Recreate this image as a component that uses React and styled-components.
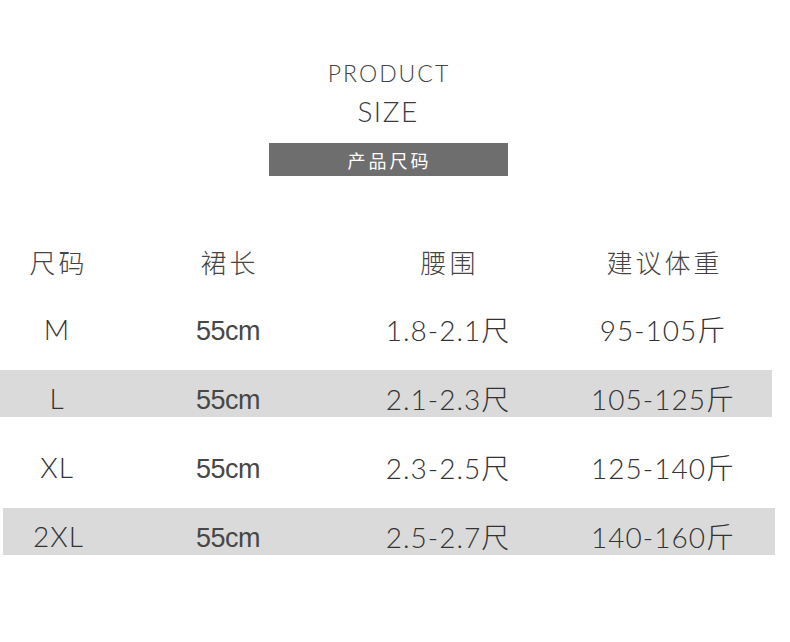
import styled, { createGlobalStyle } from "styled-components";

const SIZES = [
  { size: "M", length: "55cm", waist: "1.8-2.1尺", weight: "95-105斤" },
  { size: "L", length: "55cm", waist: "2.1-2.3尺", weight: "105-125斤", shaded: true },
  { size: "XL", length: "55cm", waist: "2.3-2.5尺", weight: "125-140斤" },
  { size: "2XL", length: "55cm", waist: "2.5-2.7尺", weight: "140-160斤", shaded: true, shift: 3 },
];

const App = () => {
  return (
    <Page>
      <GlobalStyle />
      <Heading>
        <Kicker>PRODUCT</Kicker>
        <Title>SIZE</Title>
        <Banner>产品尺码</Banner>
      </Heading>
      <Table>
        <HeadRow>
          <HeadCell>尺码</HeadCell>
          <HeadCell>裙长</HeadCell>
          <HeadCell>腰围</HeadCell>
          <HeadCell>建议体重</HeadCell>
        </HeadRow>
        {SIZES.map((row) => (
          <Row key={row.size} $shaded={row.shaded} $shift={row.shift || 0}>
            <Cell>{row.size}</Cell>
            <Cell $plain>{row.length}</Cell>
            <Cell>{row.waist}</Cell>
            <Cell>{row.weight}</Cell>
          </Row>
        ))}
      </Table>
    </Page>
  );
};
export default App;

const GlobalStyle = createGlobalStyle`
  html, body {
    margin: 0;
    padding: 0;
    background: #ffffff;
  }
  body {
    font-family: "Lato", "Noto Sans CJK SC", sans-serif;
  }
`;

const Page = styled.div`
  width: 790px;
  height: 642px;
  overflow: hidden;
  background: #ffffff;
  padding-top: 58px;
  box-sizing: border-box;
`;

const Heading = styled.header`
  display: flex;
  flex-direction: column;
  align-items: center;
  padding-right: 14px;
`;

const Kicker = styled.div`
  font-family: "Lato", sans-serif;
  font-weight: 300;
  font-size: 23px;
  line-height: 30px;
  letter-spacing: 2px;
  color: #444444;
  padding-left: 2px;
`;

const Title = styled.div`
  font-family: "Lato", sans-serif;
  font-weight: 300;
  font-size: 28px;
  line-height: 36px;
  letter-spacing: 1.5px;
  color: #3c3c3c;
  margin-top: 5px;
`;

const Banner = styled.div`
  width: 239px;
  height: 33px;
  margin-top: 14px;
  background: #6e6e6e;
  color: #ffffff;
  font-family: "Noto Sans CJK SC", sans-serif;
  font-size: 18px;
  letter-spacing: 3px;
  display: flex;
  align-items: center;
  justify-content: center;
  padding-left: 3px;
  box-sizing: border-box;
`;

const Table = styled.section`
  display: flex;
  flex-direction: column;
  margin-top: 62px;
  gap: 22px;
`;

const HeadRow = styled.div`
  display: grid;
  grid-template-columns: 114px 228px 212px 218px;
  width: 772px;
  height: 47px;
  margin-bottom: -6px;
`;

const HeadCell = styled.div`
  display: flex;
  align-items: center;
  justify-content: center;
  font-family: "Noto Sans CJK SC", sans-serif;
  font-weight: 300;
  font-size: 26px;
  letter-spacing: 3px;
  padding-left: 3px;
  color: #444444;
`;

const Row = styled.div`
  display: grid;
  grid-template-columns: ${(p) => 114 - p.$shift}px 228px 212px 218px;
  width: 772px;
  height: 47px;
  padding-top: 8px;
  box-sizing: border-box;
  margin-left: ${(p) => p.$shift}px;
  background: ${(p) => (p.$shaded ? "#dadada" : "transparent")};
`;

const Cell = styled.div`
  display: flex;
  align-items: center;
  justify-content: center;
  padding-top: ${(p) => (p.$plain ? "5px" : "0")};
  font-family: ${(p) =>
    p.$plain
      ? `"Liberation Sans", sans-serif`
      : `"Lato", "Noto Sans CJK SC", sans-serif`};
  font-weight: ${(p) => (p.$plain ? 400 : 300)};
  font-size: ${(p) => (p.$plain ? "27px" : "28px")};
  letter-spacing: ${(p) => (p.$plain ? "-0.5px" : "1px")};
  color: ${(p) => (p.$plain ? "#474747" : "#333333")};
`;
